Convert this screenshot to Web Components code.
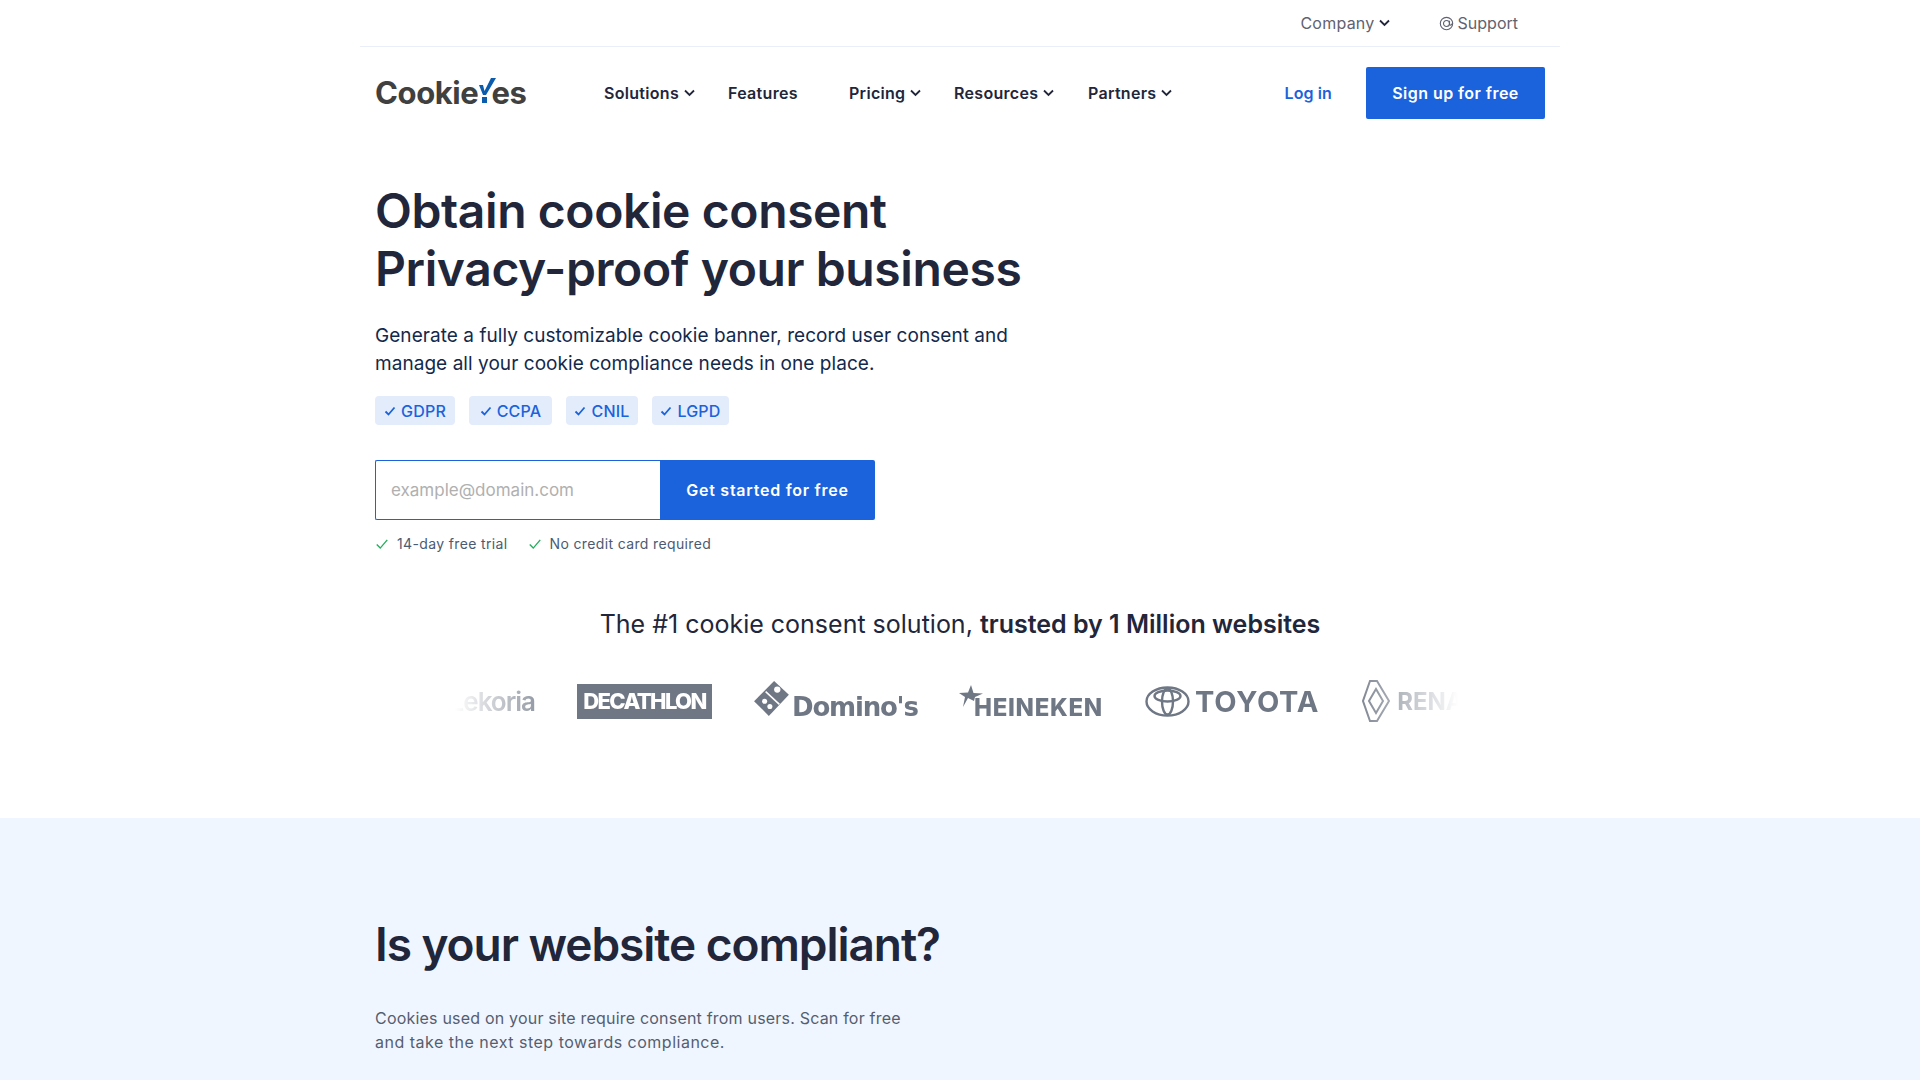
<!DOCTYPE html>
<html lang="en">
<head>
<meta charset="utf-8">
<title>CookieYes</title>
<style>
  html, body { margin: 0; padding: 0; background: #fff; }
  body { font-family: Inter, "Liberation Sans", sans-serif; height: 1080px; overflow: hidden; }
</style>
</head>
<body>
<site-topbar></site-topbar>
<site-nav></site-nav>
<hero-section></hero-section>
<logo-strip></logo-strip>
<scan-section></scan-section>

<script>
const chevron = `<svg width="11" height="8" viewBox="0 0 11 8" fill="none"><path d="M1 1.500l4.500 4.500 4.500-4.500" stroke="currentColor" stroke-width="1.8"/></svg>`
const tick = (size, stroke) => `<svg width="${size}" height="${size}" viewBox="0 0 12 12" fill="none"><path d="M1.500 6.500l3 3 6-7" stroke="currentColor" stroke-width="${stroke}"/></svg>`

class SiteTopbar extends HTMLElement {
  constructor () {
    super()
    this.attachShadow({ mode: 'open' }).innerHTML = /*html*/`
      <style>
        :host { display: block; }
        .bar {
          width: 1200px; height: 47px; margin: 0 auto; box-sizing: border-box;
          border-bottom: 1px solid #e9eef9;
          display: flex; align-items: center; justify-content: flex-end;
          padding-right: 42px; gap: 49px;
          font-size: 16px; color: #5f6270;
        }
        .item { display: flex; align-items: center; gap: 4px; }
        .item svg { color: #22263a; }
        .company { letter-spacing: .25px; }
        .support svg { color: #5f6270; }
      </style>
      <div class="bar">
        <span class="item company">Company ${chevron}</span>
        <span class="item support">
          <svg width="15" height="15" viewBox="0 0 16 16" fill="none" stroke="currentColor" stroke-width="1.2"><circle cx="8" cy="8" r="6.600"/><circle cx="8" cy="8" r="3.200"/><path d="M11.200 5v3.600c0 1.600 2.600 1.600 2.600-.6"/></svg>
          Support
        </span>
      </div>`
  }
}

class SiteNav extends HTMLElement {
  constructor () {
    super()
    const links = [
      ['Solutions', true, 124],
      ['Features', false, 121],
      ['Pricing', true, 105],
      ['Resources', true, 134],
      ['Partners', true, 90]
    ]
    this.attachShadow({ mode: 'open' }).innerHTML = /*html*/`
      <style>
        :host { display: block; }
        nav {
          width: 1200px; height: 91px; margin: 0 auto; box-sizing: border-box; padding: 0 15px;
          display: flex; align-items: center; color: #22263a;
        }
        .logo { width: 229px; flex: none; display: flex; align-items: flex-end; font-weight: 700; font-size: 31px; letter-spacing: -.4px; color: #404040; line-height: 30px; }
        .logo svg { flex: none; margin: 0 -6px 4px -1px; }
        .links { display: flex; font-size: 16px; font-weight: 600; letter-spacing: .3px; flex: 1; }
        .links a { display: flex; align-items: center; gap: 5px; }
        .login { font-size: 16px; font-weight: 600; letter-spacing: .1px; color: #1a63dc; margin-right: 34px; }
        .cta { width: 179px; height: 52px; background: #1a63dc; color: #fff; border: 0; border-radius: 2px; font: 600 16px Inter, sans-serif; letter-spacing: .45px; }
      </style>
      <nav>
        <div class="logo">
          <span>Cookie</span>
          <svg width="20" height="26" viewBox="0 0 20 26"><path d="M2 7h4l1.500 6L14 0h5L9 17H6z" fill="#0b5cad"/><rect x="5" y="19" width="5" height="6" fill="#0b5cad"/></svg>
          <span>es</span>
        </div>
        <div class="links">
          ${links.map(([t, c, w]) => `<a style="width:${w}px">${t}${c ? chevron : ''}</a>`).join('')}
        </div>
        <span class="login">Log in</span>
        <button class="cta">Sign up for free</button>
      </nav>`
  }
}

class HeroSection extends HTMLElement {
  constructor () {
    super()
    const chips = [['GDPR', 80], ['CCPA', 83], ['CNIL', 72], ['LGPD', 77]]
    this.attachShadow({ mode: 'open' }).innerHTML = /*html*/`
      <style>
        :host { display: block; }
        section { width: 1200px; margin: 0 auto; box-sizing: border-box; padding: 44px 15px 0; }
        h1 { margin: 0; font-size: 48px; line-height: 58px; font-weight: 600; letter-spacing: -.4px; color: #22263a; }
        p { margin: 24px 0 0; font-size: 19px; line-height: 28px; letter-spacing: .05px; color: #13294b; }
        .chips { display: flex; gap: 14px; margin-top: 18px; }
        .chip { display: flex; align-items: center; justify-content: center; gap: 5px; height: 29px; box-sizing: border-box; border-radius: 4px; background: #e3ecfb; color: #1a63dc; font-size: 16px; font-weight: 500; letter-spacing: .2px; }
        .form { display: flex; width: 500px; height: 60px; margin-top: 35px; }
        .field { width: 285px; box-sizing: border-box; border: 1px solid #1a63dc; border-right: 0; border-radius: 2px 0 0 2px; display: flex; align-items: center; padding-left: 15px; font-size: 17px; color: #b0b0b0; }
        .go { flex: 1; background: #1a63dc; color: #fff; border: 0; border-radius: 0 2px 2px 0; font: 600 16px Inter, sans-serif; letter-spacing: .75px; }
        .notes { display: flex; gap: 20px; margin-top: 15px; font-size: 14px; letter-spacing: .36px; color: #4a5b72; line-height: 18px; }
        .note { display: flex; align-items: center; gap: 8px; }
        .note svg { color: #27ae60; }
      </style>
      <section>
        <h1>Obtain cookie consent<br>Privacy-proof your business</h1>
        <p>Generate a fully customizable cookie banner, record user consent and<br>manage all your cookie compliance needs in one place.</p>
        <div class="chips">
          ${chips.map(([c, w]) => `<span class="chip" style="width:${w}px">${tick(12, 1.8)}${c}</span>`).join('')}
        </div>
        <div class="form">
          <div class="field">example@domain.com</div>
          <button class="go">Get started for free</button>
        </div>
        <div class="notes">
          <span class="note">${tick(14, 1.2)}14-day free trial</span>
          <span class="note">${tick(14, 1.2)}No credit card required</span>
        </div>
      </section>`
  }
}

class LogoStrip extends HTMLElement {
  constructor () {
    super()
    this.attachShadow({ mode: 'open' }).innerHTML = /*html*/`
      <style>
        :host { display: block; }
        h3 { margin: 53px 0 0; text-align: center; font-size: 25px; line-height: 36px; font-weight: 400; color: #22263a; }
        h3 b { font-weight: 600; }
        .strip {
          width: 1010px; height: 60px; margin: 29px auto 0; overflow: hidden;
          -webkit-mask-image: linear-gradient(90deg, transparent 0, #000 110px, #000 893px, transparent 1003px);
          mask-image: linear-gradient(90deg, transparent 0, #000 110px, #000 893px, transparent 1003px);
        }
        .track { display: flex; align-items: center; height: 60px; gap: 42px; color: #6f7785; transform: translateX(-32px); width: max-content; }
        .kor { font-size: 26px; font-weight: 600; letter-spacing: -1px; width: 112px; text-align: right; white-space: nowrap; }
        .dec { width: 135px; height: 35px; background: #6f7785; color: #fff; font-weight: 800; font-size: 22px; letter-spacing: -1.6px; display: flex; align-items: center; justify-content: center; }
        .dom { display: flex; align-items: center; gap: 1px; width: 164px; margin-left: -1px; font-family: "DejaVu Sans", sans-serif; font-weight: 700; font-size: 26px; letter-spacing: -1.2px; }
        .dom svg { flex: none; margin-top: -6px; }
        .dom span { margin-top: 12px; }
        .hei { display: flex; align-items: flex-end; width: 144px; font-weight: 800; font-size: 24px; letter-spacing: .7px; line-height: 26px; box-sizing: border-box; margin-top: 4px; }
        .hei svg { flex: none; margin: 0 -9px 12px 0; }
        .toy { display: flex; align-items: center; gap: 5px; font-weight: 700; font-size: 29px; letter-spacing: .8px; }
        .ren { display: flex; align-items: center; gap: 7px; font-size: 24px; font-weight: 700; margin-left: 1px; }
        .toy svg, .ren svg { flex: none; }
      </style>
      <h3>The #1 cookie consent solution, <b>trusted by 1 Million websites</b></h3>
      <div class="strip"><div class="track">
        <span class="kor">Lekoria</span>
        <span class="dec">DECATHLON</span>
        <span class="dom">
          <svg width="38" height="38" viewBox="0 0 36 36"><path d="M1 21L20 2l14 13-19 20z" fill="currentColor"/><g fill="#fff"><circle cx="23" cy="10" r="3"/><circle cx="11" cy="21" r="2.400"/><circle cx="16" cy="26" r="2.400"/></g><path d="M12 12l13 12" stroke="#fff" stroke-width="1.500"/></svg>
          <span>Domino's</span>
        </span>
        <span class="hei">
          <svg width="24" height="24" viewBox="0 0 24 24"><path d="M12 0l2.500 8 9.500.5-8 3.500-1 4-6-3-5 9 2-10-6-4 9-.5z" fill="currentColor"/></svg>
          <span>HEINEKEN</span>
        </span>
        <span class="toy">
          <svg width="45" height="31" viewBox="0 0 45 31" fill="none" stroke="currentColor" stroke-width="2.400"><ellipse cx="22.500" cy="15.500" rx="21" ry="14"/><ellipse cx="22.500" cy="10" rx="13" ry="5.500"/><ellipse cx="22.500" cy="15.500" rx="5.500" ry="13"/></svg>
          <span>TOYOTA</span>
        </span>
        <span class="ren">
          <svg width="28" height="42" viewBox="0 0 28 42" fill="none" stroke="currentColor" stroke-width="2"><path d="M8 1h7l12 20-12 20H8L1 21z"/><path d="M14 9l7 12-7 12-7-12z"/></svg>
          <span>RENAULT</span>
        </span>
      </div></div>`
  }
}

class ScanSection extends HTMLElement {
  constructor () {
    super()
    this.attachShadow({ mode: 'open' }).innerHTML = /*html*/`
      <style>
        :host { display: block; background: #f0f6ff; margin-top: 87px; height: 263px; }
        section { width: 1200px; margin: 0 auto; box-sizing: border-box; padding: 97px 15px 0; }
        h2 { margin: 0; font-size: 46px; line-height: 58px; font-weight: 600; letter-spacing: -1.05px; color: #22263a; }
        p { margin: 33px 0 0; font-size: 16px; line-height: 24px; color: #555e70; }
        .first { letter-spacing: .2px; }
        .second { letter-spacing: .5px; }
      </style>
      <section>
        <h2>Is your website compliant?</h2>
        <p><span class="first">Cookies used on your site require consent from users. Scan for free</span><br><span class="second">and take the next step towards compliance.</span></p>
      </section>`
  }
}

customElements.define('site-topbar', SiteTopbar)
customElements.define('site-nav', SiteNav)
customElements.define('hero-section', HeroSection)
customElements.define('logo-strip', LogoStrip)
customElements.define('scan-section', ScanSection)
</script>
</body>
</html>
